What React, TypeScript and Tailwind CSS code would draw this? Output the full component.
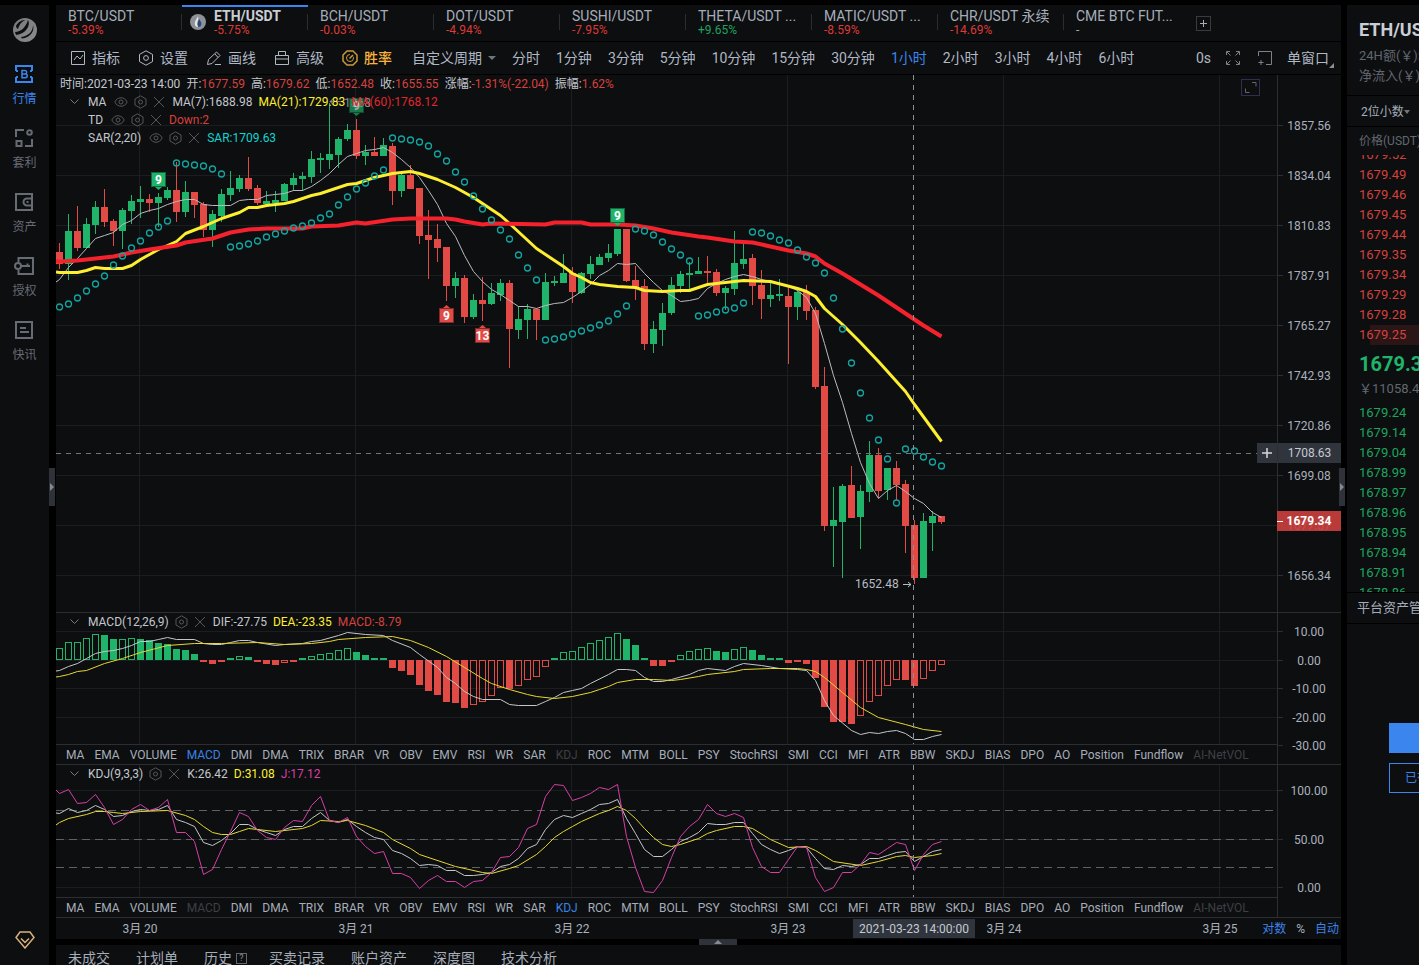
import type { ReactNode } from "react";
import clsx from "clsx";

const UP = "#1fb46a";
const DOWN = "#e24a45";
const STEP = 9;
const BAR = 7;

const TABS = [
  { name: "BTC/USDT", change: "-5.39%" },
  { name: "ETH/USDT", change: "-5.75%" },
  { name: "BCH/USDT", change: "-0.03%" },
  { name: "DOT/USDT", change: "-4.94%" },
  { name: "SUSHI/USDT", change: "-7.95%" },
  { name: "THETA/USDT ...", change: "+9.65%" },
  { name: "MATIC/USDT ...", change: "-8.59%" },
  { name: "CHR/USDT 永续", change: "-14.69%" },
  { name: "CME BTC FUT...", change: "-" },
];

const PERIODS = [
  "分时",
  "1分钟",
  "3分钟",
  "5分钟",
  "10分钟",
  "15分钟",
  "30分钟",
  "1小时",
  "2小时",
  "3小时",
  "4小时",
  "6小时",
];

const INDICATORS = [
  "MA", "EMA", "VOLUME", "MACD", "DMI", "DMA", "TRIX", "BRAR", "VR", "OBV",
  "EMV", "RSI", "WR", "SAR", "KDJ", "ROC", "MTM", "BOLL", "PSY", "StochRSI",
  "SMI", "CCI", "MFI", "ATR", "BBW", "SKDJ", "BIAS", "DPO", "AO", "Position",
  "Fundflow", "AI-NetVOL",
];

const ASKS = [
  "1679.52", "1679.49", "1679.46", "1679.45", "1679.44",
  "1679.35", "1679.34", "1679.29", "1679.28", "1679.25",
];

const BIDS = [
  "1679.24", "1679.14", "1679.04", "1678.99", "1678.97",
  "1678.96", "1678.95", "1678.94", "1678.91", "1678.86",
];

const PRICE_TICKS: Tick[] = [
  [50, "1857.56"],
  [100, "1834.04"],
  [150, "1810.83"],
  [200, "1787.91"],
  [250, "1765.27"],
  [300, "1742.93"],
  [350, "1720.86"],
  [400, "1699.08"],
  [450, "1677.57"],
  [500, "1656.34"],
];

const MACD_TICKS: Tick[] = [
  [18, "10.00"],
  [47, "0.00"],
  [75, "-10.00"],
  [104, "-20.00"],
  [132, "-30.00"],
];

const KDJ_TICKS: Tick[] = [
  [25, "100.00"],
  [74, "50.00"],
  [122, "0.00"],
];

const DAYS = ["3月 20", "3月 21", "3月 22", "3月 23", "3月 24", "3月 25"];

type Tick = [number, string];
type Point = [number, number];
// direction (1 up, 0 down), high, body top, body bottom, low
type Candle = [0 | 1, number, number, number, number];

const CANDLES: Candle[] = [
  [0, 168, 177, 189, 194], [1, 139, 156, 189, 205], [0, 131, 156, 173, 176],
  [1, 143, 149, 173, 173], [1, 126, 132, 150, 159], [0, 114, 132, 147, 152],
  [0, 144, 146, 156, 171], [1, 133, 135, 156, 174], [1, 120, 126, 136, 149],
  [1, 111, 124, 127, 143], [0, 119, 124, 128, 137], [1, 118, 122, 128, 152],
  [1, 112, 115, 123, 125], [0, 87, 115, 137, 147], [1, 106, 117, 137, 142],
  [0, 117, 117, 130, 143], [0, 127, 129, 155, 162], [1, 135, 139, 155, 172],
  [1, 114, 119, 141, 147], [1, 96, 113, 120, 126], [1, 100, 103, 114, 117],
  [0, 82, 103, 114, 116], [0, 110, 113, 128, 130], [1, 116, 126, 129, 131],
  [1, 116, 125, 128, 137], [1, 108, 109, 126, 126], [1, 98, 103, 110, 116],
  [1, 97, 101, 104, 116], [1, 76, 84, 102, 108], [1, 78, 83, 85, 98],
  [1, 28, 79, 85, 94], [1, 62, 64, 80, 93], [1, 49, 55, 64, 66],
  [0, 44, 55, 81, 84], [1, 70, 77, 81, 90], [0, 62, 77, 81, 81],
  [1, 63, 70, 81, 81], [0, 68, 71, 116, 130], [1, 99, 100, 116, 122],
  [0, 90, 100, 114, 114], [0, 113, 113, 161, 169], [0, 135, 160, 165, 204],
  [0, 149, 164, 173, 187], [0, 172, 172, 211, 226], [1, 197, 203, 211, 223],
  [0, 200, 203, 242, 248], [1, 219, 225, 242, 244], [0, 202, 225, 229, 246],
  [1, 208, 218, 229, 230], [1, 204, 208, 220, 226], [0, 205, 208, 254, 293],
  [1, 231, 244, 255, 264], [1, 229, 234, 245, 264], [0, 233, 234, 245, 265],
  [1, 198, 207, 245, 245], [1, 201, 206, 208, 211], [1, 179, 198, 208, 208],
  [0, 192, 198, 217, 228], [1, 197, 198, 218, 219], [1, 181, 189, 199, 204],
  [1, 179, 182, 190, 190], [1, 169, 178, 183, 187], [1, 154, 154, 179, 181],
  [0, 154, 154, 206, 207], [0, 191, 205, 212, 225], [0, 204, 211, 269, 275],
  [1, 246, 254, 269, 278], [1, 228, 238, 255, 271], [1, 202, 210, 238, 240],
  [1, 196, 199, 211, 218], [1, 187, 198, 200, 215], [1, 182, 196, 199, 199],
  [0, 181, 196, 198, 210], [0, 194, 197, 218, 221], [1, 211, 213, 218, 235],
  [1, 156, 188, 214, 220], [1, 167, 184, 189, 194], [0, 179, 183, 211, 230],
  [0, 195, 210, 224, 244], [1, 208, 220, 224, 232], [1, 204, 219, 221, 226],
  [0, 212, 221, 232, 289], [1, 215, 217, 232, 245], [0, 210, 217, 236, 245],
  [0, 232, 235, 312, 314], [0, 292, 311, 451, 456], [1, 412, 445, 451, 492],
  [1, 409, 411, 447, 503], [0, 391, 410, 443, 443], [1, 410, 416, 442, 474],
  [1, 366, 380, 417, 427], [0, 373, 380, 416, 423], [1, 393, 393, 415, 425],
  [0, 386, 393, 410, 425], [0, 405, 409, 451, 478], [0, 445, 450, 503, 509],
  [1, 438, 446, 503, 503], [1, 436, 441, 448, 476], [0, 441, 441, 447, 449],
];

const MA7 = [
  204, 192, 183, 173, 163, 160, 157, 149, 145, 138, 135, 133, 129, 126, 124,
  124, 129, 130, 130, 130, 125, 124, 124, 120, 119, 118, 115, 115, 111, 105,
  98, 89, 81, 78, 75, 74, 72, 77, 84, 92, 102, 115, 129, 148, 161, 180, 196,
  206, 214, 219, 225, 231, 231, 233, 230, 228, 227, 222, 216, 209, 200, 195,
  188, 189, 188, 198, 207, 215, 220, 226, 225, 223, 213, 208, 204, 201, 199,
  201, 204, 206, 208, 211, 215, 222, 238, 268, 300, 327, 358, 387, 408, 423,
  415, 410, 416, 423, 428, 437, 442,
];

const MA21: Point[] = [
  [0, 197], [2, 197], [3, 195], [4, 192], [5, 193], [7, 193], [8, 190],
  [9, 184], [10, 179], [11, 174], [13, 166], [14, 158], [16, 151], [18, 143],
  [20, 137], [21, 132], [22, 132], [23, 130], [25, 128], [26, 126], [28, 120],
  [29, 118], [31, 112], [32, 109], [33, 108], [35, 102], [36, 100], [37, 98],
  [39, 96], [40, 98], [42, 104], [44, 112], [46, 122], [49, 140], [50, 148],
  [53, 173], [56, 191], [57, 198], [58, 202], [59, 207], [60, 209], [62, 211],
  [64, 212], [65, 215], [67, 216], [69, 215], [70, 215], [71, 212], [72, 209],
  [74, 207], [76, 205], [79, 206], [82, 213], [83, 216], [84, 221], [85, 233],
  [87, 249], [89, 267], [91, 286], [93, 306], [94, 316], [95, 329], [98, 366],
];

const MA60: Point[] = [
  [0, 186], [2, 185], [4, 183], [6, 181], [8, 177], [10, 174], [13, 170],
  [14, 167], [17, 163], [19, 157], [21, 154], [23, 153], [27, 153], [28, 151],
  [31, 150], [33, 147], [34, 148], [37, 144], [39, 143], [43, 143], [44, 144],
  [45, 146], [47, 149], [48, 148], [54, 149], [55, 147], [58, 147], [59, 149],
  [62, 149], [64, 150], [66, 153], [68, 157], [71, 161], [72, 162], [75, 166],
  [77, 167], [79, 171], [81, 175], [83, 178], [84, 181], [85, 188], [87, 198],
  [89, 209], [91, 220], [94, 238], [95, 244], [96, 250], [98, 261],
];

const SAR = [
  232, 229, 223, 216, 209, 201, 190, 181, 173, 166, 158, 152, 146, 88, 89, 90,
  91, 94, 99, 172, 171, 169, 166, 162, 159, 156, 153, 151, 148, 143, 139, 130,
  122, 114, 108, 101, 95, 63, 64, 65, 67, 71, 79, 86, 97, 107, 121, 134, 145,
  155, 164, 180, 193, 205, 265, 264, 262, 259, 256, 253, 250, 246, 239, 231,
  154, 156, 160, 167, 174, 180, 186, 241, 240, 237, 235, 233, 228, 157, 158,
  161, 165, 168, 175, 182, 188, 198, 223, 254, 288, 318, 343, 365, 384, 428,
  374, 376, 382, 387, 391,
];

// Bar heights; positive values rise above the zero line.
const MACD = [
  12, 18, 18, 22, 26, 25, 21, 21, 22, 21, 20, 17, 16, 11, 10, 6, -2, -4, -2,
  2, 4, 3, -2, -4, -5, -3, -2, 2, 4, 6, 7, 10, 12, 8, 5, 2, 2, -8, -11, -15,
  -25, -31, -35, -42, -43, -48, -45, -42, -36, -28, -29, -26, -20, -17, -7, 2,
  8, 9, 13, 17, 20, 23, 27, 21, 15, 2, -6, -6, -2, 5, 9, 11, 12, 9, 8, 11, 13,
  10, 5, 2, 2, -3, -2, -4, -18, -47, -62, -62, -64, -56, -42, -36, -26, -20,
  -20, -26, -19, -11, -5,
];

const HOLLOW = new Set([
  0, 1, 2, 3, 4, 7, 8, 20, 25, 28, 29, 30, 31, 32, 46, 47, 48, 49, 51, 52, 53,
  54, 56, 57, 58, 59, 60, 61, 62, 69, 70, 71, 72, 75, 76, 89, 90, 91, 92, 93,
  96, 97, 98,
]);

const DIF: Point[] = [
  [0, 57], [1, 53], [2, 50], [3, 45], [4, 40], [5, 38], [6, 37], [7, 35],
  [8, 32], [9, 28], [10, 28], [11, 26], [12, 24], [13, 26], [15, 26], [16, 30],
  [17, 31], [18, 31], [19, 29], [20, 27], [21, 27], [22, 29], [24, 32],
  [25, 31], [27, 30], [28, 28], [29, 27], [31, 22], [32, 19], [34, 21],
  [36, 22], [37, 27], [39, 34], [40, 41], [42, 54], [43, 64], [44, 70],
  [45, 78], [46, 83], [47, 86], [49, 86], [50, 91], [51, 92], [53, 92],
  [54, 88], [55, 84], [56, 79], [57, 77], [58, 75], [59, 70], [61, 61],
  [62, 56], [63, 56], [64, 57], [65, 64], [66, 68], [67, 68], [68, 66],
  [70, 61], [71, 57], [72, 55], [74, 57], [75, 53], [76, 50], [78, 52],
  [80, 55], [82, 56], [83, 57], [84, 67], [85, 87], [86, 102], [88, 117],
  [89, 121], [90, 119], [91, 120], [92, 118], [93, 117], [94, 120], [95, 126],
  [96, 126], [97, 123], [98, 121],
];

const DEA: Point[] = [
  [0, 63], [1, 61], [2, 58], [3, 57], [5, 50], [7, 45], [9, 39], [12, 32],
  [15, 30], [18, 30], [22, 29], [25, 31], [28, 30], [30, 28], [31, 26],
  [34, 24], [37, 23], [39, 27], [41, 34], [43, 43], [45, 54], [47, 65],
  [48, 70], [50, 76], [52, 81], [53, 83], [55, 85], [57, 83], [59, 79],
  [60, 76], [61, 73], [62, 69], [64, 66], [66, 66], [68, 67], [69, 66],
  [71, 63], [72, 61], [75, 58], [76, 56], [79, 55], [82, 55], [83, 56],
  [84, 58], [85, 64], [87, 79], [89, 94], [91, 104], [94, 111], [96, 116],
  [98, 118],
];

const K_LINE = [
  48, 43, 47, 45, 40, 44, 51, 50, 46, 44, 45, 44, 40, 54, 57, 61, 77, 80, 75,
  68, 59, 59, 64, 67, 70, 64, 61, 61, 53, 47, 55, 57, 54, 61, 67, 72, 74, 85,
  88, 93, 100, 99, 100, 105, 105, 110, 110, 109, 107, 101, 99, 93, 83, 79, 64,
  54, 50, 52, 48, 44, 39, 38, 34, 53, 68, 84, 91, 91, 84, 76, 72, 67, 58, 59,
  59, 57, 57, 68, 79, 84, 88, 85, 81, 82, 93, 103, 104, 100, 101, 99, 93, 93,
  90, 87, 86, 96, 91, 86, 84,
];

const D_LINE: Point[] = [
  [0, 57], [1, 53], [3, 49], [4, 46], [5, 46], [6, 47], [7, 48], [9, 46],
  [12, 45], [14, 50], [15, 54], [16, 61], [17, 67], [18, 69], [19, 69],
  [20, 66], [21, 63], [24, 66], [27, 63], [28, 60], [29, 55], [31, 56],
  [32, 55], [34, 60], [36, 67], [37, 74], [39, 83], [40, 89], [43, 98],
  [44, 101], [47, 107], [48, 108], [50, 103], [51, 100], [53, 89], [54, 81],
  [55, 72], [56, 66], [57, 61], [58, 56], [60, 48], [61, 45], [62, 41],
  [63, 45], [64, 53], [65, 63], [66, 72], [67, 79], [68, 81], [69, 79],
  [71, 73], [72, 68], [73, 65], [75, 61], [76, 61], [77, 63], [79, 74],
  [81, 82], [83, 81], [84, 85], [86, 96], [89, 100], [91, 96], [93, 91],
  [94, 90], [95, 92], [97, 90], [98, 88],
];

const J_LINE = [
  28, 24, 38, 37, 29, 42, 59, 54, 44, 39, 45, 42, 34, 67, 67, 76, 109, 104,
  84, 66, 47, 51, 65, 72, 74, 62, 55, 56, 40, 31, 55, 57, 52, 71, 81, 88, 86,
  108, 108, 112, 123, 115, 110, 116, 116, 122, 116, 115, 107, 92, 91, 82, 63,
  59, 31, 19, 20, 35, 32, 28, 22, 24, 19, 71, 102, 126, 127, 115, 92, 71, 61,
  54, 39, 48, 51, 48, 52, 82, 101, 107, 107, 94, 81, 82, 112, 126, 122, 107,
  107, 99, 87, 89, 83, 77, 79, 105, 89, 79, 76,
];

const center = (i: number) => i * STEP + 3.5;

const indexed = (values: number[]): Point[] =>
  values.map((y, i): Point => [i, y]);

function toPath(points: Point[], startY: number) {
  return (
    `M0 ${startY}` + points.map(([i, y]) => `L${center(i)} ${y + 0.5}`).join("")
  );
}

function Curve({
  points,
  startY,
  color,
  width = 1,
}: {
  points: Point[];
  startY: number;
  color: string;
  width?: number;
}) {
  return (
    <path
      d={toPath(points, startY)}
      fill="none"
      stroke={color}
      strokeWidth={width}
      strokeLinejoin="round"
    />
  );
}

function Grid({ ticks, height }: { ticks: Tick[]; height: number }) {
  return (
    <g stroke="#1b1d20" shapeRendering="crispEdges">
      {ticks.map(([y]) => (
        <line key={y} x1="0" x2="100%" y1={y + 0.5} y2={y + 0.5} />
      ))}
      {DAYS.map((day, n) => (
        <line
          key={day}
          x1={83.5 + n * 216}
          x2={83.5 + n * 216}
          y1="0"
          y2={height}
        />
      ))}
    </g>
  );
}

function CrosshairX({ height }: { height: number }) {
  return (
    <line
      x1="857.5"
      x2="857.5"
      y1="0"
      y2={height}
      stroke="#8b9098"
      strokeDasharray="5 5"
      shapeRendering="crispEdges"
    />
  );
}

function Axis({ ticks, children }: { ticks: Tick[]; children?: ReactNode }) {
  return (
    <div className="relative w-16 shrink-0 border-l border-[#2c2e33]">
      <svg className="block h-full w-full overflow-visible text-xs">
        {ticks.map(([y, label]) => (
          <g key={label}>
            <line x1="0" x2="5" y1={y + 0.5} y2={y + 0.5} stroke="#2c2e33" />
            <text x="31" y={y + 5} textAnchor="middle" fill="#a9b1bd">
              {label}
            </text>
          </g>
        ))}
      </svg>
      {children}
    </div>
  );
}

function Badge({
  index,
  y,
  label,
  up,
  dim = false,
}: {
  index: number;
  y: number;
  label: string;
  up: boolean;
  dim?: boolean;
}) {
  const x = center(index) - 7.5;
  const tip = up
    ? `M${x + 4} ${y + 15}l3.5 3l3.5 -3z`
    : `M${x + 4} ${y}l3.5 -3l3.5 3z`;
  return (
    <g opacity={dim ? 0.65 : 1}>
      <rect
        x={x + 0.5}
        y={y + 0.5}
        width="14"
        height="14"
        fill={up ? UP : DOWN}
        stroke={up ? "#12683d" : "#7d2a28"}
      />
      <path d={tip} fill={up ? UP : DOWN} />
      <text
        x={x + 7.5}
        y={y + 12}
        textAnchor="middle"
        fill="#fff"
        className="text-xs font-bold"
      >
        {label}
      </text>
    </g>
  );
}

function PriceChart() {
  return (
    <svg className="block h-full w-full text-xs">
      <Grid ticks={PRICE_TICKS} height={537} />
      <text x="273" y="32" fill="#8b9098">
        ← 1868
      </text>
      {CANDLES.map(([up, high, top, bottom, low], i) => (
        <g key={i} fill={up ? UP : DOWN} shapeRendering="crispEdges">
          <rect x={i * STEP + 3} y={high} width="1" height={low - high} />
          <rect
            x={i * STEP}
            y={top}
            width={BAR}
            height={Math.max(bottom - top, 1)}
          />
        </g>
      ))}
      <Curve points={indexed(MA7)} startY={207} color="#b9bbbf" />
      <Curve points={MA21} startY={197} color="#fdee30" width={3} />
      <Curve points={MA60} startY={186} color="#f5222d" width={4} />
      {SAR.map((y, i) => (
        <circle
          key={i}
          cx={center(i)}
          cy={y}
          r="3"
          fill="none"
          stroke="#12a5a0"
          strokeWidth="1.3"
        />
      ))}
      <Badge index={11} y={97} label="9" up />
      <Badge index={33} y={23} label="9" up dim />
      <Badge index={62} y={133} label="9" up />
      <Badge index={43} y={233} label="9" up={false} />
      <Badge index={47} y={253} label="13" up={false} />
      <text x="799" y="513" fill="#b9bdc4">
        1652.48
      </text>
      <path
        d="M847 509.5h8M852 507l3 2.5l-3 2.5"
        fill="none"
        stroke="#b9bdc4"
      />
      <CrosshairX height={537} />
      <line
        x1="0"
        x2="100%"
        y1="378.5"
        y2="378.5"
        stroke="#6f747c"
        strokeDasharray="5 5"
        shapeRendering="crispEdges"
      />
    </svg>
  );
}

function MacdChart() {
  return (
    <svg className="block h-full w-full">
      <Grid ticks={MACD_TICKS} height={131} />
      {MACD.map((value, i) => {
        const h = Math.abs(value);
        const y = value > 0 ? 47 - h : 47;
        const color = value > 0 ? UP : DOWN;
        return HOLLOW.has(i) ? (
          <rect
            key={i}
            x={i * STEP + 0.5}
            y={y + 0.5}
            width={BAR - 1}
            height={h - 1}
            fill="none"
            stroke={color}
          />
        ) : (
          <rect key={i} x={i * STEP} y={y} width={BAR} height={h} fill={color} />
        );
      })}
      <Curve points={DIF} startY={58} color="#c4c6ca" />
      <Curve points={DEA} startY={64} color="#e6d72e" />
      <CrosshairX height={131} />
    </svg>
  );
}

function KdjChart() {
  return (
    <svg className="block h-full w-full">
      <Grid ticks={KDJ_TICKS} height={132} />
      {[45.5, 74.5, 102.5].map((y) => (
        <line
          key={y}
          x1="0"
          x2="100%"
          y1={y}
          y2={y}
          stroke="#5d6268"
          strokeDasharray="8 5"
          shapeRendering="crispEdges"
        />
      ))}
      <Curve points={indexed(K_LINE)} startY={48} color="#c4c6ca" />
      <Curve points={D_LINE} startY={60} color="#e6d72e" />
      <Curve points={indexed(J_LINE)} startY={25} color="#d53fa6" />
      <CrosshairX height={132} />
    </svg>
  );
}

function IndicatorTabs({ active, muted }: { active: string; muted: string }) {
  return (
    <div className="flex h-5 items-center gap-[10px] overflow-hidden border-b border-[#2c2e33] px-[10px] text-xs text-[#a5adb9]">
      {INDICATORS.map((name) => (
        <button
          key={name}
          type="button"
          className={clsx(
            "shrink-0 leading-4",
            name === active && "text-[#3b82e6]",
            (name === muted || name === "AI-NetVOL") && "text-[#3d4045]",
          )}
        >
          {name}
        </button>
      ))}
    </div>
  );
}

function LegendRow({
  name,
  eye = false,
  collapsible = false,
  children,
}: {
  name: string;
  eye?: boolean;
  collapsible?: boolean;
  children: ReactNode;
}) {
  return (
    <div className="flex h-[18px] items-center pl-[14px] whitespace-nowrap">
      <span className="w-[18px]">
        {collapsible && (
          <button type="button" aria-label="收起" className="block">
            <svg width="9" height="6" fill="none" stroke="#767a81">
              <path d="M.5 .5l4 4l4 -4" />
            </svg>
          </button>
        )}
      </span>
      <span>{name}</span>
      <span
        className={clsx(
          "mr-[7px] flex items-center gap-[6px] text-[#54575d]",
          eye ? "ml-2" : "ml-[6px]",
        )}
      >
        {eye && (
          <button type="button" aria-label="显示">
            <svg width="14" height="12" fill="none" stroke="currentColor">
              <path d="M.8 6C3.5 .3 10.5 .3 13.2 6C10.5 11.7 3.5 11.7 .8 6z" />
              <circle cx="7" cy="6" r="2" />
            </svg>
          </button>
        )}
        <button type="button" aria-label="设置">
          <svg width="13" height="14" fill="none" stroke="currentColor">
            <path d="M6.500 .8L12 4V10L6.500 13.200L1 10V4z" />
            <circle cx="6.500" cy="7" r="2" />
          </svg>
        </button>
        <button type="button" aria-label="删除">
          <svg width="12" height="12" fill="none" stroke="currentColor">
            <path d="M1 1l10 10M11 1l-10 10" />
          </svg>
        </button>
      </span>
      <span className="flex gap-[6px]">{children}</span>
    </div>
  );
}

function Sidebar() {
  const items: { label: string; icon: ReactNode }[] = [
    {
      label: "行情",
      icon: (
        <>
          <path d="M1 6V1H17V6M1 12V17H17V12M1 6h2M1 12h2M17 6h-2M17 12h-2" />
          <path
            d="M7 5.500h3a1.700 1.700 0 0 1 0 3.500h-3zM7 9h3.400a1.800 1.800 0 0 1 0 3.700h-3.400z"
            strokeWidth="1.5"
          />
        </>
      ),
    },
    {
      label: "套利",
      icon: (
        <path d="M1 8V1h8M17 10v7H10M1.500 12h5v5h-5zM12.200 3.500a2.300 2.300 0 1 0 4.600 0a2.300 2.300 0 1 0 -4.600 0" />
      ),
    },
    {
      label: "资产",
      icon: <path d="M1 1H17V17H1zM17 5.500H12a3.500 3.500 0 0 0 0 7H17M11.500 9h2" />,
    },
    {
      label: "授权",
      icon: (
        <path d="M3.500 5V1H18V17H3.500V13M6 9h9M12.500 9V6.500M0 9a3 3 0 1 0 6 0a3 3 0 1 0 -6 0" />
      ),
    },
    {
      label: "快讯",
      icon: <path d="M1 1H17V17H1zM5 7h6M5 11h9" />,
    },
  ];

  return (
    <nav
      aria-label="主导航"
      className="flex w-[49px] shrink-0 flex-col items-center bg-[#0d0e10] pt-3"
    >
      <svg width="26" height="26" viewBox="0 0 26 26" className="mb-[15px]">
        <defs>
          <linearGradient id="globe" x1="0" y1="0" x2="1" y2="1">
            <stop offset="0" stopColor="#77797b" />
            <stop offset="1" stopColor="#8a8c8f" />
          </linearGradient>
        </defs>
        <circle cx="13" cy="13" r="12" fill="url(#globe)" />
        <path d="M3 15C9 15 14 10 16 3C19 8 14 17 4 18z" fill="#0d0e10" />
        <path d="M9 20C17 19 21 14 21 8C23 14 18 21 10 21.500z" fill="#0d0e10" />
        <path d="M4 9C6 5 10 3 13 3C9 5 7 8 6 12C4.500 11 4 10 4 9z" fill="#0d0e10" />
      </svg>
      <ul className="flex flex-col gap-[22px]">
        {items.map(({ label, icon }, i) => (
          <li key={label}>
            <a
              href="#"
              className={clsx(
                "flex h-[42px] flex-col items-center pt-[7px] text-xs",
                i === 0 ? "text-[#3b86ee]" : "text-[#666b74]",
              )}
            >
              <svg
                width="18"
                height="18"
                fill="none"
                stroke="currentColor"
                strokeWidth="2"
                className="shrink-0 overflow-visible"
              >
                {icon}
              </svg>
              <span className="mt-2 leading-4">{label}</span>
            </a>
          </li>
        ))}
      </ul>
      <button type="button" aria-label="会员" className="mt-auto mb-4">
        <svg
          width="20"
          height="18"
          fill="none"
          stroke="#d9b27c"
          strokeWidth="1.5"
        >
          <path d="M5 1h10l4 5.500L10 17L1 6.500z" />
          <path d="M6 7.500l4 4l4 -4" />
        </svg>
      </button>
    </nav>
  );
}

function MarketTabs() {
  return (
    <div className="flex h-9 shrink-0 items-stretch bg-[#0d0e10]">
      {TABS.map(({ name, change }, i) => {
        const active = i === 1;
        return (
          <button
            key={name}
            type="button"
            className={clsx(
              "flex w-[126px] shrink-0 items-center border-t-2 pb-1 text-left",
              active ? "border-[#3b86ee]" : "border-transparent",
            )}
          >
            {active && (
              <svg width="16" height="16" className="ml-2 shrink-0">
                <circle cx="8" cy="8" r="8" fill="#8e9196" />
                <path d="M8 2.500C6 6 4.800 7.500 4.800 9.500a3.300 3.300 0 0 0 3.400 3.400C6.500 10.500 7 8 8.500 5z" fill="#e4e6ea" />
                <path d="M9 5c2 2.500 2.600 4 2.300 5.500a3 3 0 0 1 -3 2.500C7.200 10.500 7.800 8 9 5z" fill="#27477e" />
              </svg>
            )}
            <span
              className={clsx("flex-1 truncate", active ? "pl-2" : "pl-3")}
            >
              <span
                className={clsx(
                  "block text-sm leading-4",
                  active ? "font-bold text-[#c9ced6]" : "text-[#a5adb9]",
                )}
              >
                {name}
              </span>
              <span
                className={clsx(
                  "block text-xs leading-3",
                  change.startsWith("+")
                    ? "text-[#1fa35f]"
                    : change === "-"
                      ? "text-[#a5adb9]"
                      : "text-[#dd3a36]",
                )}
              >
                {change}
              </span>
            </span>
            {i < TABS.length - 1 && <span className="h-4 w-px bg-[#2b2d31]" />}
          </button>
        );
      })}
      <button
        type="button"
        aria-label="添加"
        className="ml-[6px] flex h-[15px] w-[15px] items-center justify-center self-center border border-[#393b3f] text-[#a5adb9]"
      >
        <svg width="7" height="7" stroke="currentColor">
          <path d="M3.500 0v7M0 3.500h7" />
        </svg>
      </button>
    </div>
  );
}

function Toolbar() {
  const tools: { label: string; icon: ReactNode }[] = [
    {
      label: "指标",
      icon: <path d="M1.500 1.500h13v13h-13zM4 10l3 -4l3 3l3 -4" />,
    },
    {
      label: "设置",
      icon: (
        <path d="M8 .8L14.500 4.400V11.600L8 15.200L1.500 11.600V4.400zM5.600 8a2.400 2.400 0 1 0 4.800 0a2.400 2.400 0 1 0 -4.800 0" />
      ),
    },
    {
      label: "画线",
      icon: <path d="M1.500 14.500L2.500 9.500L10.500 2L14 5.500L6 13.500zM9 14.500h6M9 4l3 3.500" />,
    },
    {
      label: "高级",
      icon: <path d="M1.500 5.500h13v9h-13zM4.500 5.500V1.500h7v4M1.500 9h13" />,
    },
  ];

  return (
    <div className="my-px flex h-8 shrink-0 items-center bg-[#0d0e10] pr-[7px] pl-[14px] text-sm text-[#b0b8c4]">
      <div className="flex gap-[18px]">
        {tools.map(({ label, icon }) => (
          <button key={label} type="button" className="flex items-center gap-[6px]">
            <svg width="16" height="16" fill="none" stroke="currentColor">
              {icon}
            </svg>
            {label}
          </button>
        ))}
        <button
          type="button"
          className="flex items-center gap-[6px] font-medium text-[#f7b43c]"
        >
          <svg width="16" height="16" fill="none" stroke="#c99a3d">
            <path
              d="M5 1h6l4 4v6l-4 4H5l-4 -4V5z"
              strokeWidth="1.500"
            />
            <circle cx="8" cy="8" r="3.500" strokeDasharray="16 4" />
            <path d="M7.500 8.500L11 5" strokeWidth="1.500" />
          </svg>
          胜率
        </button>
      </div>
      <label className="ml-5 flex items-center gap-[6px]">
        <select aria-label="自定义周期" className="appearance-none outline-none">
          <option>自定义周期</option>
        </select>
        <svg width="8" height="4" fill="#70757d">
          <path d="M0 0h8l-4 4z" />
        </svg>
      </label>
      <div className="ml-4 flex gap-4">
        {PERIODS.map((period) => (
          <button
            key={period}
            type="button"
            className={clsx(period === "1小时" && "text-[#3b86ee]")}
          >
            {period}
          </button>
        ))}
      </div>
      <div className="ml-auto flex items-center">
        <span>0s</span>
        <button type="button" aria-label="全屏" className="ml-[14px]">
          <svg width="16" height="16" fill="none" stroke="#7d828a">
            <path d="M1.500 5V1.500H5M2 2l3.500 3.500M11 1.500h3.500V5M14 2l-3.500 3.500M1.500 11v3.500H5M2 14l3.500 -3.500M11 14.500h3.500V11M14 14l-3.500 -3.500" />
          </svg>
        </button>
        <button type="button" aria-label="添加窗口" className="ml-4">
          <svg width="16" height="16" fill="none" stroke="#7d828a">
            <path d="M1.500 6V1.500h13v13H9M4 10v5M1.500 12.500h5" />
          </svg>
        </button>
        <label className="ml-[14px] flex items-end">
          <select aria-label="窗口布局" className="appearance-none outline-none">
            <option>单窗口</option>
          </select>
          <svg width="5" height="5" fill="#8b9098">
            <path d="M5 0v5H0z" />
          </svg>
        </label>
      </div>
    </div>
  );
}

function OrderPanel() {
  return (
    <aside className="flex w-[72px] shrink-0 flex-col overflow-hidden bg-[#0d0e10] text-[13px] whitespace-nowrap text-[#62676f]">
      <div className="h-[90px] shrink-0 pt-3 pl-3">
        <h2 className="text-lg leading-[26px] font-bold text-[#c9ced6]">
          ETH/USDT
        </h2>
        <p className="mt-[3px] leading-5">24H额(￥):</p>
        <p className="leading-5">净流入(￥):</p>
      </div>
      <div className="flex h-8 shrink-0 items-center border-y border-black pt-px pl-[14px] text-xs text-[#a5adb9]">
        <select aria-label="小数位数" className="appearance-none outline-none">
          <option>2位小数</option>
        </select>
        <svg width="6" height="4" fill="#70757d">
          <path d="M0 0h6l-3 4z" />
        </svg>
      </div>
      <p className="h-7 shrink-0 pl-3 text-xs leading-[28px]">价格(USDT)</p>
      <ul className="flex h-[190px] shrink-0 flex-col justify-end overflow-hidden text-[#d6413d]">
        {ASKS.map((price, i) => (
          <li key={price} className="relative h-5 shrink-0 pl-3 leading-5">
            {i === ASKS.length - 1 && (
              <span className="absolute inset-y-0 right-0 left-[23px] bg-[#2a1517]" />
            )}
            <span className="relative">{price}</span>
          </li>
        ))}
      </ul>
      <p className="mt-[7px] pl-3 text-xl leading-6 font-bold text-[#1fb46a]">
        1679.34
      </p>
      <p className="mt-[3px] mb-1 pl-3 leading-5">￥11058.45</p>
      <ul className="h-[189px] shrink-0 overflow-hidden text-[#1fa35f]">
        {BIDS.map((price) => (
          <li key={price} className="h-5 pl-3 leading-5">
            {price}
          </li>
        ))}
      </ul>
      <h3 className="h-8 shrink-0 border-y border-black pl-[10px] leading-[29px] text-[#a5adb9]">
        平台资产管理
      </h3>
      <div className="mt-[99px] flex flex-col gap-[10px] pl-[42px] text-xs">
        <button
          type="button"
          aria-label="注册"
          className="h-[30px] w-[132px] bg-[#3b86ee]"
        />
        <button
          type="button"
          className="h-[30px] w-[132px] border border-[#3b86ee] pl-[15px] text-left text-[#3b86ee]"
        >
          已有账户
        </button>
      </div>
    </aside>
  );
}

function TimeAxis() {
  return (
    <div className="flex h-[21px] shrink-0 bg-[#0d0e10] text-xs text-[#a9b1bd]">
      <svg className="block h-full min-w-0 flex-1">
        {DAYS.map((day, n) => (
          <text
            key={day}
            x={84 + n * 216}
            y="15"
            textAnchor="middle"
            fill="currentColor"
          >
            {day}
          </text>
        ))}
        <rect x="797" y="1" width="122" height="19" fill="#30343c" />
        <text x="858" y="15" textAnchor="middle" fill="#c6cad1">
          2021-03-23 14:00:00
        </text>
      </svg>
      <div className="flex items-center gap-[10px] pr-[2px]">
        <button type="button" className="text-[#3b82e6]">
          对数
        </button>
        <button type="button">%</button>
        <button type="button" className="text-[#3b82e6]">
          自动
        </button>
      </div>
    </div>
  );
}

function BottomTabs() {
  const tabs = [
    "未成交",
    "计划单",
    "历史",
    "买卖记录",
    "账户资产",
    "深度图",
    "技术分析",
  ];
  return (
    <div className="mt-[6px] flex flex-1 items-start gap-[26px] overflow-hidden bg-[#0d0e10] pt-[3px] pl-3 text-sm text-[#a5adb9]">
      {tabs.map((tab) => (
        <button
          key={tab}
          type="button"
          className={clsx(
            "flex items-center gap-1",
            tab === "历史" && "-mr-1",
          )}
        >
          {tab}
          {tab === "历史" && (
            <span className="flex h-[11px] w-[11px] items-center justify-center border border-[#63676e] text-[9px] leading-none text-[#8b9098]">
              ?
            </span>
          )}
        </button>
      ))}
    </div>
  );
}

function PricePane() {
  const ohlc = [
    ["时间", "2021-03-23 14:00"],
    ["开", "1677.59"],
    ["高", "1679.62"],
    ["低", "1652.48"],
    ["收", "1655.55"],
    ["涨幅", "-1.31%(-22.04)"],
    ["振幅", "1.62%"],
  ];
  return (
    <section
      aria-label="K线"
      className="flex h-[538px] border-b border-[#2c2e33]"
    >
      <div className="relative min-w-0 flex-1">
        <PriceChart />
        <div className="absolute top-0 left-0 text-xs text-[#c3c7ce]">
          <div className="flex h-[18px] items-center gap-[6px] pl-1 whitespace-nowrap">
            {ohlc.map(([label, value], i) => (
              <span key={label}>
                {label}:
                <span className={clsx(i > 0 && "text-[#d6413d]")}>{value}</span>
              </span>
            ))}
          </div>
          <LegendRow name="MA" eye collapsible>
            <span>MA(7):1688.98</span>
            <span className="text-[#fdee30]">MA(21):1729.83</span>
            <span className="text-[#e0262c]">MA(60):1768.12</span>
          </LegendRow>
          <LegendRow name="TD" eye>
            <span className="text-[#d6413d]">Down:2</span>
          </LegendRow>
          <LegendRow name="SAR(2,20)" eye>
            <span className="text-[#12d3cf]">SAR:1709.63</span>
          </LegendRow>
        </div>
        <button
          type="button"
          aria-label="放大"
          className="absolute top-1 right-[17px] flex h-[17px] w-[19px] items-center justify-center border border-[#2b3050]"
        >
          <svg width="13" height="13" fill="none" stroke="#62666d">
            <path d="M8 1.500h4V5.500M1.500 7.500v4h4" />
          </svg>
        </button>
        <button
          type="button"
          aria-label="添加提醒"
          className="absolute top-[368px] right-0 flex h-5 w-5 items-center justify-center bg-[#30343c] text-[#d5d8dd]"
        >
          <svg width="10" height="10" stroke="currentColor" strokeWidth="1.500">
            <path d="M5 0v10M0 5h10" />
          </svg>
        </button>
      </div>
      <Axis ticks={PRICE_TICKS}>
        <div className="absolute top-[368px] right-0 left-0 h-5 bg-[#30343c] text-center text-xs leading-5 text-[#c6cad1]">
          1708.63
        </div>
        <div className="absolute top-[436px] right-0 -left-px h-5 bg-[#cc403e]/90 text-center text-xs leading-[21px] font-bold text-white">
          <span className="absolute top-[10px] left-0 h-px w-[6px] bg-white" />
          1679.34
        </div>
      </Axis>
    </section>
  );
}

export default function App() {
  return (
    <div className="flex h-screen overflow-hidden bg-black pt-[5px] font-['Roboto','Noto_Sans_CJK_SC',sans-serif]">
      <Sidebar />

      <main className="relative ml-[7px] flex min-w-0 flex-1 flex-col">
        <MarketTabs />
        <Toolbar />

        <div className="shrink-0 bg-[#0d0e10]">
          <PricePane />

          <section aria-label="MACD" className="flex h-[152px]">
            <div className="flex min-w-0 flex-1 flex-col">
              <div className="relative h-[132px] border-b border-[#2c2e33]">
                <MacdChart />
                <div className="absolute top-0 left-0 text-xs text-[#c3c7ce]">
                  <LegendRow name="MACD(12,26,9)" collapsible>
                    <span>DIF:-27.75</span>
                    <span className="text-[#fdee30]">DEA:-23.35</span>
                    <span className="text-[#d6413d]">MACD:-8.79</span>
                  </LegendRow>
                </div>
              </div>
              <IndicatorTabs active="MACD" muted="KDJ" />
            </div>
            <div className="flex border-b border-[#2c2e33]">
              <Axis ticks={MACD_TICKS} />
            </div>
          </section>

          <section aria-label="KDJ" className="flex h-[153px]">
            <div className="flex min-w-0 flex-1 flex-col">
              <div className="relative h-[133px] border-b border-[#2c2e33]">
                <KdjChart />
                <div className="absolute top-0 left-0 text-xs text-[#c3c7ce]">
                  <LegendRow name="KDJ(9,3,3)" collapsible>
                    <span>K:26.42</span>
                    <span className="text-[#fdee30]">D:31.08</span>
                    <span className="text-[#d53fa6]">J:17.12</span>
                  </LegendRow>
                </div>
              </div>
              <IndicatorTabs active="KDJ" muted="MACD" />
            </div>
            <div className="flex border-b border-[#2c2e33]">
              <Axis ticks={KDJ_TICKS} />
            </div>
          </section>
        </div>

        <TimeAxis />
        <BottomTabs />

        <button
          type="button"
          aria-label="展开左侧"
          className="absolute top-[463px] -left-[7px] flex h-[38px] w-[6px] items-center justify-center bg-[#2f3238]"
        >
          <svg width="4" height="8" fill="#858a92">
            <path d="M0 0l4 4l-4 4z" />
          </svg>
        </button>
        <button
          type="button"
          aria-label="收起右侧"
          className="absolute top-[463px] -right-1 flex h-[38px] w-[6px] items-center justify-center bg-[#2f3238]"
        >
          <svg width="4" height="8" fill="#858a92">
            <path d="M0 0l4 4l-4 4z" />
          </svg>
        </button>
        <button
          type="button"
          aria-label="展开底部"
          className="absolute top-[934px] left-1/2 flex h-[6px] w-[38px] items-center justify-center bg-[#2f3238]"
        >
          <svg width="8" height="4" fill="#858a92">
            <path d="M0 4l4 -4l4 4z" />
          </svg>
        </button>
      </main>

      <div className="w-[6px] shrink-0" />
      <OrderPanel />
    </div>
  );
}
